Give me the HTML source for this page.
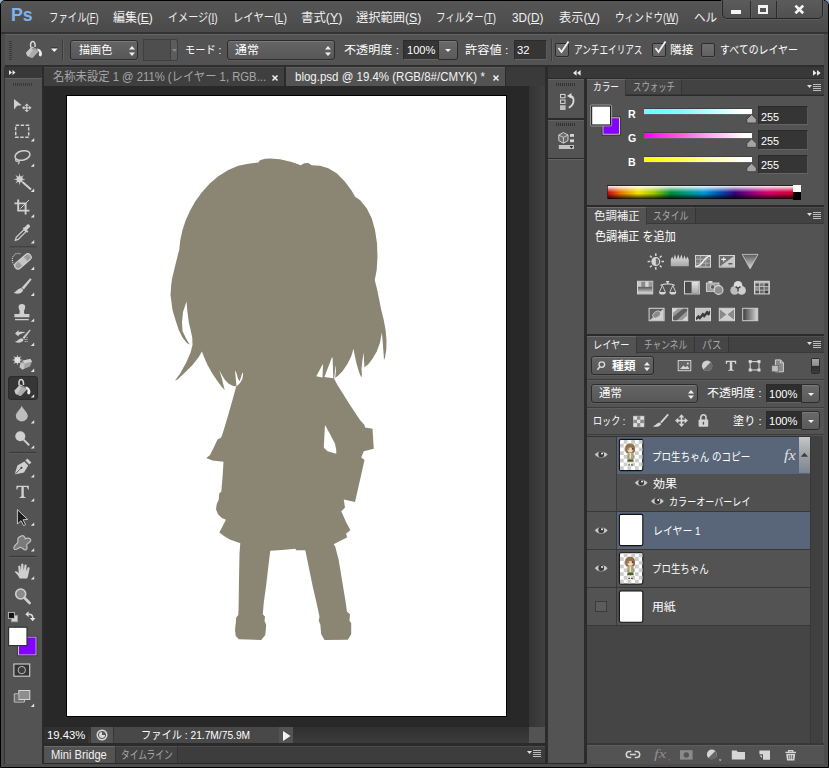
<!DOCTYPE html>
<html lang="ja">
<head>
<meta charset="utf-8">
<title>Photoshop</title>
<style>
html,body{margin:0;padding:0;}
body{width:829px;height:768px;overflow:hidden;background:#9cb4d8;position:relative;
 font-family:"Liberation Sans","Noto Sans CJK JP",sans-serif;font-size:11px;color:#e8e8e8;}
.a{position:absolute;box-sizing:border-box;}
.t{position:absolute;white-space:nowrap;transform-origin:0 0;}
svg{position:absolute;overflow:visible;}
.sel{position:absolute;box-sizing:border-box;border:1px solid #2c2c2c;border-radius:3px;background:linear-gradient(#656565,#575757);box-shadow:inset 0 1px 0 #7a7a7a, 0 1px 0 #5e5e5e;}
.inp{position:absolute;box-sizing:border-box;border:1px solid #2b2b2b;border-bottom-color:#646464;border-right-color:#5a5a5a;background:#353535;}
.btn{position:absolute;box-sizing:border-box;border:1px solid #2c2c2c;border-radius:0 3px 3px 0;background:linear-gradient(#6a6a6a,#5a5a5a);box-shadow:inset 0 1px 0 #7a7a7a;}
.cb{position:absolute;box-sizing:border-box;width:14px;height:14px;border:1px solid #2c2c2c;background:linear-gradient(#6e6e6e,#626262);border-radius:2px;box-shadow:0 1px 0 #606060;}
</style>
</head>
<body>
<div class="a" id="win" style="left:0;top:0;width:829px;height:768px;background:#4c4c4c;border:1px solid #000;border-radius:5px 5px 0 0;overflow:hidden;"></div>
<div class="a" style="left:1px;top:1px;width:827px;height:32px;background:linear-gradient(#565656,#505050 50%,#4a4a4a);border-radius:4px 4px 0 0;"></div>
<div class="a" style="left:1px;top:32px;width:827px;height:2px;background:#333;"></div>
<div class="t" id="t1" style="left:10.5px;top:4.12px;font-size:19px;line-height:22px;color:#80b2e8;font-weight:bold;transform:scaleX(0.9348);">Ps</div>
<div class="t" id="t2" style="left:49.3px;top:10.64px;font-size:12px;line-height:15px;color:#f2f2f2;transform:scaleX(0.7825);">ファイル(<u>F</u>)</div>
<div class="t" id="t3" style="left:113.3px;top:10.64px;font-size:12px;line-height:15px;color:#f2f2f2;transform:scaleX(0.9950);">編集(<u>E</u>)</div>
<div class="t" id="t4" style="left:168.05px;top:10.64px;font-size:12px;line-height:15px;color:#f2f2f2;transform:scaleX(0.8398);">イメージ(<u>I</u>)</div>
<div class="t" id="t5" style="left:233.05px;top:10.64px;font-size:12px;line-height:15px;color:#f2f2f2;transform:scaleX(0.8637);">レイヤー(<u>L</u>)</div>
<div class="t" id="t6" style="left:301.3px;top:10.64px;font-size:12px;line-height:15px;color:#f2f2f2;transform:scaleX(1.0325);">書式(<u>Y</u>)</div>
<div class="t" id="t7" style="left:356.3px;top:10.64px;font-size:12px;line-height:15px;color:#f2f2f2;transform:scaleX(1.0203);">選択範囲(<u>S</u>)</div>
<div class="t" id="t8" style="left:436.3px;top:10.64px;font-size:12px;line-height:15px;color:#f2f2f2;transform:scaleX(0.7973);">フィルター(<u>T</u>)</div>
<div class="t" id="t9" style="left:511.8px;top:10.64px;font-size:12px;line-height:15px;color:#f2f2f2;transform:scaleX(0.9781);">3D(<u>D</u>)</div>
<div class="t" id="t10" style="left:558.8px;top:10.64px;font-size:12px;line-height:15px;color:#f2f2f2;transform:scaleX(1.0200);">表示(<u>V</u>)</div>
<div class="t" id="t11" style="left:614.8px;top:10.64px;font-size:12px;line-height:15px;color:#f2f2f2;transform:scaleX(0.8013);">ウィンドウ(<u>W</u>)</div>
<div class="a" style="left:0;top:0;width:716.6px;height:33px;overflow:hidden;">
<div class="t" id="t12" style="left:693.8px;top:10.64px;font-size:12px;line-height:15px;color:#f2f2f2;transform:scaleX(0.9679);">ヘルプ(<u>H</u>)</div>
</div>
<div class="a" style="left:722px;top:0;width:101px;height:19px;border:1px solid #262626;border-top:none;border-radius:0 0 5px 5px;background:linear-gradient(#5b5b5b,#505050);box-shadow:0 1px 0 #5e5e5e,1px 0 0 #5a5a5a,-1px 0 0 #5a5a5a;"></div>
<div class="a" style="left:749.5px;top:1px;width:1px;height:17px;background:#2a2a2a;"></div>
<div class="a" style="left:750.5px;top:1px;width:1px;height:17px;background:#5c5c5c;"></div>
<div class="a" style="left:775.5px;top:1px;width:1px;height:17px;background:#2a2a2a;"></div>
<div class="a" style="left:776.5px;top:1px;width:1px;height:17px;background:#5c5c5c;"></div>
<div class="a" style="left:731.3px;top:9.6px;width:10.2px;height:4px;background:#f4f4f4;"></div>
<div class="a" style="left:757.6px;top:5.2px;width:10.4px;height:8.8px;border:2px solid #f4f4f4;border-top-width:3px;"></div>
<svg style="left:793.8px;top:5.4px" width="10.6" height="8.8"><path d="M1.4 0.6 L9.2 8.2 M9.2 0.6 L1.4 8.2" stroke="#f4f4f4" stroke-width="2.7" fill="none"/></svg>
<div class="a" style="left:5px;top:34px;width:819px;height:31px;background:#535353;border-top:1px solid #636363;"></div>
<div class="a" style="left:5px;top:65px;width:819px;height:2px;background:#2e2e2e;"></div>
<div class="a" style="left:9px;top:41px;width:3px;height:19px;background:repeating-linear-gradient(#3a3a3a 0 1px,transparent 1px 2px);"></div>
<div class="a" style="left:62px;top:39px;width:1px;height:22px;background:#3c3c3c;"></div>
<div class="a" style="left:63px;top:39px;width:1px;height:22px;background:#5f5f5f;"></div>
<svg style="left:0;top:0" width="829" height="768" viewBox="0 0 829 768"><g transform="translate(26 41)"><path d="M4.9 6.6 C3.8 2.8 5.2 0.5 6.8 0.6 C8.4 0.7 9.4 2.8 9.1 6" fill="none" stroke="#dadada" stroke-width="1.5"/><path d="M0.5 11.2 L5.2 6.2 C5.6 5.8 6.2 5.8 6.8 6 L12.2 8.4 C12.9 8.8 13.1 9.8 12.6 10.4 L7 16.4 C6.4 16.9 5.8 17 5 16.8 L2.4 15.6 C1 14.8 0 13 0.5 11.2Z" fill="#acacac"/><path d="M0.5 11.2 L5.2 6.2 C5.6 5.8 6.2 5.8 6.8 6 L8 6.6 L2.6 15.6 C1 14.8 0 13 0.5 11.2Z" fill="#c8c8c8"/><path d="M6 7.6 C8 7.4 10.6 8.4 12 9.6" fill="none" stroke="#7e7e7e" stroke-width="0.9"/><path d="M11.4 7.6 C13.6 7.8 15.2 9.4 15.8 11.4 C16.3 13.2 15.8 15.2 14.3 15.4 C12.8 15.4 12.5 13.8 13.1 12.3 C13.4 11 12.8 10 11.6 9.2Z" fill="#ececec"/></g><path d="M51 48.4 H57.6 L54.3 52Z" fill="#f4f4f4"/><path d="M51 47.6 H57.6" stroke="#333" stroke-width="0.8"/></svg>
<div class="sel" style="left:70.4px;top:40.4px;width:67.6px;height:19.6px;"></div>
<div class="t" id="t13" style="left:78.8px;top:42.69px;font-size:11px;line-height:14px;color:#fff;transform:scaleX(1.0091);">描画色</div>
<svg style="left:129px;top:46px" width="6" height="10"><path d="M3 0 L6 3.6 H0Z M3 10 L0 6.4 H6Z" fill="#f0f0f0"/></svg>
<div class="a" style="left:143px;top:38.6px;width:28px;height:22.6px;border:1px solid #3f3f3f;background:#4e4e4e;"></div>
<div class="a" style="left:170.6px;top:38.6px;width:7px;height:22.6px;border:1px solid #3f3f3f;border-left:none;border-radius:0 3px 3px 0;background:#5c5c5c;"></div>
<svg style="left:171.6px;top:49.4px" width="5" height="3"><path d="M0 0 H5 L2.5 3Z" fill="#8a8a8a"/></svg>
<div class="t" id="t14" style="left:185.3px;top:42.69px;font-size:11px;line-height:14px;color:#fff;transform:scaleX(0.9308);">モード :</div>
<div class="sel" style="left:227.4px;top:40.4px;width:107.8px;height:19.6px;"></div>
<div class="t" id="t15" style="left:234.8px;top:42.69px;font-size:11px;line-height:14px;color:#fff;transform:scaleX(1.0818);">通常</div>
<svg style="left:325px;top:46px" width="6" height="10"><path d="M3 0 L6 3.6 H0Z M3 10 L0 6.4 H6Z" fill="#f0f0f0"/></svg>
<div class="t" id="t16" style="left:344.3px;top:42.69px;font-size:11px;line-height:14px;color:#fff;transform:scaleX(1.1010);">不透明度 :</div>
<div class="inp" style="left:403px;top:40px;width:36px;height:20px;"></div>
<div class="t" id="t17" style="left:406.8px;top:43.19px;font-size:11px;line-height:14px;color:#fff;transform:scaleX(1.0107);">100%</div>
<div class="btn" style="left:438px;top:40px;width:20px;height:20px;"></div>
<svg style="left:445px;top:49px" width="6" height="3"><path d="M0 0 H6 L3 3Z" fill="#f0f0f0"/></svg>
<div class="t" id="t18" style="left:464.8px;top:42.69px;font-size:11px;line-height:14px;color:#fff;transform:scaleX(1.1103);">許容値 :</div>
<div class="inp" style="left:514px;top:40px;width:33px;height:20px;"></div>
<div class="t" id="t19" style="left:517.3px;top:43.19px;font-size:11px;line-height:14px;color:#fff;transform:scaleX(1.0250);">32</div>
<div class="a" style="left:551px;top:39px;width:1px;height:22px;background:#3c3c3c;"></div>
<div class="a" style="left:552px;top:39px;width:1px;height:22px;background:#5f5f5f;"></div>
<div class="cb" style="left:555px;top:43px;"></div>
<svg style="left:556px;top:40px" width="14" height="14"><path d="M2.5 8 L5.5 12 L12.5 1.5" stroke="#f4f4f4" stroke-width="1.8" fill="none"/></svg>
<div class="t" id="t20" style="left:574.3px;top:42.69px;font-size:11px;line-height:14px;color:#fff;transform:scaleX(0.7818);">アンチエイリアス</div>
<div class="cb" style="left:652px;top:43px;"></div>
<svg style="left:653px;top:40px" width="14" height="14"><path d="M2.5 8 L5.5 12 L12.5 1.5" stroke="#f4f4f4" stroke-width="1.8" fill="none"/></svg>
<div class="t" id="t21" style="left:670.3px;top:42.69px;font-size:11px;line-height:14px;color:#fff;transform:scaleX(1.0591);">隣接</div>
<div class="cb" style="left:701px;top:43px;"></div>
<div class="t" id="t22" style="left:720.05px;top:42.69px;font-size:11px;line-height:14px;color:#fff;transform:scaleX(0.9017);">すべてのレイヤー</div>
<div class="a" style="left:4px;top:67px;width:1px;height:697px;background:#333;"></div>
<div class="a" style="left:5px;top:67px;width:37px;height:11px;background:#383838;"></div>
<div class="a" style="left:5px;top:78px;width:37px;height:686px;background:#535353;border-top:1px solid #636363;"></div>
<div class="a" style="left:42px;top:67px;width:2px;height:697px;background:#2b2b2b;"></div>
<svg style="left:9px;top:70.4px" width="7" height="5"><path d="M0 0 L3 2.5 L0 5Z M3.5 0 L6.5 2.5 L3.5 5Z" fill="#e8e8e8"/></svg>
<div class="a" style="left:13px;top:83px;width:20px;height:3px;background:repeating-linear-gradient(90deg,#3a3a3a 0 1px,transparent 1px 2px);"></div>
<div class="a" style="left:44px;top:67px;width:502px;height:697px;background:#282828;"></div>
<div class="a" style="left:44px;top:67px;width:502px;height:19px;background:#3a3a3a;"></div>
<div class="a" style="left:44px;top:67px;width:240px;height:19px;background:#3f3f3f;border-top:1px solid #4a4a4a;"></div>
<div class="t" id="t23" style="left:53.05px;top:69.92px;font-size:12.5px;line-height:15.5px;color:#a6a6a6;transform:scaleX(0.9038);">名称未設定 1 @ 211% (レイヤー 1, RGB...</div>
<svg style="left:272px;top:74.5px" width="6" height="6"><path d="M0.5 0.5 L5.5 5.5 M5.5 0.5 L0.5 5.5" stroke="#f0f0f0" stroke-width="1.5" fill="none"/></svg>
<div class="a" style="left:284px;top:67px;width:2px;height:19px;background:#2b2b2b;"></div>
<div class="a" style="left:286px;top:67px;width:219px;height:19px;background:#535353;border-top:1px solid #636363;"></div>
<div class="t" id="t24" style="left:294.8px;top:69.92px;font-size:12.5px;line-height:15.5px;color:#f4f4f4;transform:scaleX(0.9193);">blog.psd @ 19.4% (RGB/8#/CMYK) *</div>
<svg style="left:493px;top:74.5px" width="6" height="6"><path d="M0.5 0.5 L5.5 5.5 M5.5 0.5 L0.5 5.5" stroke="#f0f0f0" stroke-width="1.5" fill="none"/></svg>
<div class="a" style="left:505px;top:67px;width:1px;height:19px;background:#2b2b2b;"></div>
<div class="a" style="left:66px;top:95px;width:441px;height:622px;background:#000;"></div>
<div class="a" style="left:67px;top:96px;width:439px;height:620px;background:#fff;"></div>
<div class="a" style="left:529px;top:86px;width:16px;height:641px;background:linear-gradient(90deg,#343434,#404040);"></div>
<div class="a" style="left:44px;top:727px;width:485px;height:16px;background:linear-gradient(#303030,#3c3c3c);"></div>
<div class="a" style="left:529px;top:727px;width:16px;height:16px;background:#535353;"></div>
<div class="a" style="left:44px;top:727px;width:44px;height:16px;background:#303030;"></div>
<div class="t" id="t25" style="left:47.099999999999994px;top:728.19px;font-size:11px;line-height:14px;color:#fff;transform:scaleX(1.0270);">19.43%</div>
<div class="a" style="left:91px;top:727px;width:22px;height:16px;background:#535353;"></div>
<svg style="left:96px;top:729px" width="12" height="12"><circle cx="6" cy="6" r="5.5" fill="#d8d8d8"/><path d="M6 6 V2.5 A3.5 3.5 0 0 1 9.5 6Z" fill="#555"/><circle cx="6" cy="6" r="3.6" fill="none" stroke="#555" stroke-width="1"/></svg>
<div class="a" style="left:114px;top:727px;width:165px;height:16px;background:#484848;"></div>
<div class="t" id="t26" style="left:141.3px;top:728.19px;font-size:11px;line-height:14px;color:#fff;transform:scaleX(0.9299);">ファイル : 21.7M/75.9M</div>
<div class="a" style="left:279px;top:727px;width:14px;height:16px;background:#535353;"></div>
<svg style="left:283px;top:730.5px" width="8" height="10"><path d="M0 0 L7.5 5 L0 10Z" fill="#f4f4f4"/></svg>
<div class="a" style="left:44px;top:743px;width:502px;height:3px;background:#2b2b2b;"></div>
<div class="a" style="left:44px;top:746px;width:501px;height:17px;background:#3d3d3d;border-top:1px solid #4c4c4c;"></div>
<div class="a" style="left:44px;top:746px;width:71px;height:17px;background:#535353;border-top:1px solid #6a6a6a;"></div>
<div class="t" id="t27" style="left:51.3px;top:747.84px;font-size:12px;line-height:15px;color:#f0f0f0;transform:scaleX(0.9300);">Mini Bridge</div>
<div class="a" style="left:115px;top:746px;width:63px;height:17px;background:#424242;border-top:1px solid #505050;border-right:1px solid #333;border-left:1px solid #333;"></div>
<div class="t" id="t28" style="left:120.8px;top:747.77px;font-size:11.5px;line-height:14.5px;color:#a8a8a8;transform:scaleX(0.7574);">タイムライン</div>
<svg style="left:527px;top:750px" width="14" height="8"><path d="M0 1 H5 L2.5 4Z" fill="#e0e0e0"/><path d="M6 0.5 H14 M6 2.5 H14 M6 4.5 H14 M6 6.5 H14" stroke="#bcbcbc" stroke-width="1"/></svg>
<div class="a" style="left:545px;top:67px;width:3px;height:697px;background:#2b2b2b;"></div>
<svg style="left:0;top:0" width="829" height="768" viewBox="0 0 829 768"><path d="M258.3,162.5 L260,160.3 265,158.7 270,158.5 280,159.2 291.7,162 300.8,165.3 304.2,163.3 308.3,163 311.7,165.3 320,165.8 328.3,168.3 336.7,173.3 345,181.7 351.7,190.8 355,196.7 360,200 366.7,208.3 371.7,218.3 375,230 377,243.3 377.5,256.7 376.7,270 374.75,280 377.25,290 379.75,302.5 381.25,310 383.75,320 385.6,330 386.5,340 386.25,350 385,357.5 384,360  383.5,352.5 382.75,342.5 381.9,332.5 380,342.5 376.9,351.25 372.5,358.75 368.1,364.4 364.4,367.25  364,360 363.75,352.5 362.5,360 361.5,368.75 361.9,375 361.25,377.5  358.75,371.25 356.25,362.5 354.4,353.75 353.5,348.75 351.25,356.25 347.5,363.75 342.5,371.25 337.5,376.25 334,378.5  337.5,385 342.5,393 350,405 360,420 364.5,425 365,427.5 372.5,428.75 373.75,448.75 363.75,451.25 361.25,457.5 364.5,460 360,480 355,502 343.75,499.5 345,507.5 341.25,511.25 346.25,522.5 350.3,530  348.7,531.7 346.2,533.3 347,537.5 340.3,540.8 333.7,544.2 335.3,546.7 338.7,560 342,580 345.3,600 347,611.7 350,614.2 349.5,620.8 351.2,623.3 351.2,634.2 347.8,639.7 324.5,640 321.2,634.2 320.3,624.2 318.7,620.8 319.5,616.7 317,605 312.8,586.7 308.7,566.7 305.3,550.3  296.2,550.3 295.3,548.7 282,550 270.3,550.8  268.7,563.3 266.2,585 263.7,603.3 262.8,614.2 265,616.7 264.5,620.8 266.2,625 265.3,635 261.2,640 238.7,639.2 235.7,635.8 235,630 235.7,623.3 236.2,617.5 238.3,615 238.7,603.3 239,580 239.5,553.3 240.3,543.3  232,540.2 229.3,539.2 224,536 219.3,532.5 226,519.7 221.8,518 218,514.2 216,509.2 216.7,504.2 218.7,499.7 219.3,493.3 221.3,491.7 222.7,475 223.5,461.7 212.5,460.5 206.25,458 210,455 213.75,447.5 217.5,439.5 221.25,437.5 223.75,430 227.5,417.5 232.5,400 236.25,386.25  233.1,386 228.75,383.75 225,380 221.9,375 219.4,370.25 221.9,378.75 223.75,386.25 224.75,390  221.9,386.9 217.5,381.25 212.5,373.75 207.5,365 203.75,356.25 201.9,351.5  198.75,356.9 192.5,365 185,372.5 177.5,379.4 175,380.6  180,373.75 186.25,362.5 190.6,352.5 192.5,345 192.25,337.5 190.6,330 188.75,322 187.5,312.5 186.5,301.5  183,312 182,322 182.5,331 185.6,337.5 189.75,344.75  186.9,343 182.5,337.5 178.75,330 175.5,320 172.5,310 170.5,295 171.2,285 172.2,278 175.8,263.3 178,254.2 179.2,250 180.3,240 182.5,230 185.8,220 190,210.8 195,201.7 201.7,192.5 210,183.3 218.3,176.3 228.3,170 238.3,165.8 248.3,163.7 Z" fill="#8b8573"/><path d="M235,370.6 L236.25,372.5 238.1,378.75 239.4,381.25 240,380 242.5,372.5 243.1,373.75 242.5,378.75 240,383.1 237.5,385.6 236.5,386.5 Z" fill="#fff"/><path d="M323,363.75 L316.25,376.25 322.5,377.5 Z" fill="#fff"/><path d="M331.9,357.5 L324.4,376.9 333.3,378.3 332.6,357.5 Z" fill="#fff"/><path d="M335.6,365 L334.2,378.4 335.2,377.8 336,370 Z" fill="#fff"/><path d="M325,425 L323.75,447.5 327.5,451.25 336.25,453.75 336.25,450 335,443.75 330,434 Z" fill="#fff"/></svg>
<svg style="left:0;top:0" width="829" height="768" viewBox="0 0 829 768"><path d="M9 247 H36.5" stroke="#3a3a3a" stroke-width="1.2"/><path d="M9 248 H36.5" stroke="#5d5d5d" stroke-width="0.8"/><path d="M9 452.5 H36.5" stroke="#3a3a3a" stroke-width="1.2"/><path d="M9 453.5 H36.5" stroke="#5d5d5d" stroke-width="0.8"/><path d="M9 556.5 H36.5" stroke="#3a3a3a" stroke-width="1.2"/><path d="M9 557.5 H36.5" stroke="#5d5d5d" stroke-width="0.8"/><path d="M14 99 L21.8 105.3 L17.2 105.8 L14 109.6Z" fill="#cfcfcf"/><path d="M26.8 103.4 L29 105.8 H27.4 V107.2 H29.2 V105.8 L31.6 107.8 L29.2 109.8 V108.4 H27.4 V110 H29 L26.8 112.2 L24.6 110 H26.2 V108.4 H24.4 V109.8 L22 107.8 L24.4 105.8 V107.2 H26.2 V105.8 H24.6Z" fill="#cfcfcf"/><rect x="15.7" y="125.2" width="13" height="12" fill="none" stroke="#cfcfcf" stroke-width="1.5" stroke-dasharray="3.4 1.6"/><path d="M34.2 138.0 V141.4 H30.8Z" fill="#e4e4e4"/><ellipse cx="22.5" cy="155.5" rx="7.6" ry="4.6" transform="rotate(-14 22.5 155.5)" fill="none" stroke="#cfcfcf" stroke-width="1.5"/><path d="M16.5 158.5 C14.5 160 16 161.8 18 161.2 C19.5 160.8 19.8 162.8 18 164" fill="none" stroke="#cfcfcf" stroke-width="1.2"/><path d="M34.2 163.4 V166.8 H30.8Z" fill="#e4e4e4"/><polygon points="25.6,179.3 21.8,180.2 23.8,183.5 20.5,181.5 19.6,185.3 18.7,181.5 15.4,183.5 17.4,180.2 13.6,179.3 17.4,178.4 15.4,175.1 18.7,177.1 19.6,173.3 20.5,177.1 23.8,175.1 21.8,178.4" fill="#cfcfcf"/><circle cx="19.6" cy="179.3" r="3" fill="#cfcfcf"/><path d="M22.5 182 L31 189.6" stroke="#cfcfcf" stroke-width="2"/><path d="M34.2 188.6 V192 H30.8Z" fill="#e4e4e4"/><path d="M18.2 199.5 V210.6 H29.4 M14.4 203.4 H25.6 V214.5" fill="none" stroke="#cfcfcf" stroke-width="1.9"/><path d="M29 200 L20.5 208.5" stroke="#cfcfcf" stroke-width="1"/><path d="M34.2 214.1 V217.5 H30.8Z" fill="#e4e4e4"/><path d="M15.4 240.2 L16.2 237.4 L24 229.6 L26 231.6 L18.2 239.4Z" fill="none" stroke="#cfcfcf" stroke-width="1.3"/><path d="M22.8 228.4 L27.2 232.8 L28.4 231.6 L26.9 230.1 L29.9 227.1 A2 2 0 0 0 27.3 224.5 L24.5 227.4 L24 226.9Z" fill="#cfcfcf"/><path d="M34.2 240.1 V243.5 H30.8Z" fill="#e4e4e4"/><g transform="rotate(-41 22.8 261.4)"><rect x="13.2" y="258.2" width="19.4" height="6.6" rx="3" fill="#9a9a9a" stroke="#cfcfcf" stroke-width="1.2"/><rect x="19.4" y="258.2" width="7" height="6.6" fill="#cfcfcf" opacity="0.8"/></g><path d="M20.4 254 A5 5.6 0 1 0 15.6 265.6" fill="none" stroke="#cfcfcf" stroke-width="1.2" stroke-dasharray="1 1"/><path d="M34.2 266.6 V270 H30.8Z" fill="#e4e4e4"/><path d="M30.2 278.2 L31.6 279.4 L23.8 289.6 L21.6 287.8Z" fill="#cfcfcf"/><path d="M21.2 288 L23.2 290 C21.8 294 17 294.8 13.6 292.4 C16.6 292 17 288.8 21.2 288Z" fill="#cfcfcf"/><path d="M34.2 292.6 V296 H30.8Z" fill="#e4e4e4"/><path d="M19.2 314 C20.8 311 18.6 309.4 18.6 307.2 A3.3 3.3 0 0 1 25.2 307.2 C25.2 309.4 23 311 24.6 314 H29.4 V317.2 H14.4 V314Z" fill="#cfcfcf"/><path d="M15 319.6 H28.8" stroke="#cfcfcf" stroke-width="1.3"/><path d="M34.2 318.40000000000003 V321.8 H30.8Z" fill="#e4e4e4"/><path d="M29.8 329.4 L30.7 330.3 L24.2 339 L22.6 337.6Z" fill="#cfcfcf"/><path d="M22.2 338.2 L23.7 339.8 C22.3 342.8 18 343.8 14.8 341.8 C17.6 341.4 18.2 338.8 22.2 338.2Z" fill="#cfcfcf"/><path d="M15 333.6 L18.6 330 V332.2 C21.6 331.4 24 332 25.6 333 C23.4 332.8 21 333.4 18.6 335 V336.6Z" fill="#cfcfcf"/><path d="M27 337 V342" stroke="#cfcfcf" stroke-width="1" stroke-dasharray="1 1"/><path d="M25.2 339 V342.6" stroke="#cfcfcf" stroke-width="1" stroke-dasharray="1 1"/><path d="M34.2 342.6 V346 H30.8Z" fill="#e4e4e4"/><polygon points="23.0,360.0 19.4,360.8 21.4,364.0 18.2,362.0 17.4,365.6 16.6,362.0 13.4,364.0 15.4,360.8 11.8,360.0 15.4,359.2 13.4,356.0 16.6,358.0 17.4,354.4 18.2,358.0 21.4,356.0 19.4,359.2" fill="#e0e0e0"/><circle cx="17.4" cy="360" r="3" fill="#e0e0e0"/><path d="M23 360.4 L30.4 359 L32 361.6 L30 366.6 L22.4 369.4 L19.6 367.2 L20.4 363.2Z" fill="#a4a4a4"/><path d="M23 360.4 L30.4 359 L32 361.6 L24.6 363.4Z" fill="#cfcfcf"/><path d="M20.4 363.4 L24.6 363.4 L24 369 L22.4 369.4 L19.6 367.2Z" fill="#c4c4c4"/><path d="M34.2 368.6 V372 H30.8Z" fill="#e4e4e4"/><rect x="8.5" y="376.5" width="29" height="23" rx="2.5" fill="#363636" stroke="#2c2c2c" stroke-width="1"/><g transform="translate(14.4 379)"><path d="M4.9 6.6 C3.8 2.8 5.2 0.5 6.8 0.6 C8.4 0.7 9.4 2.8 9.1 6" fill="none" stroke="#dadada" stroke-width="1.5"/><path d="M0.5 11.2 L5.2 6.2 C5.6 5.8 6.2 5.8 6.8 6 L12.2 8.4 C12.9 8.8 13.1 9.8 12.6 10.4 L7 16.4 C6.4 16.9 5.8 17 5 16.8 L2.4 15.6 C1 14.8 0 13 0.5 11.2Z" fill="#acacac"/><path d="M0.5 11.2 L5.2 6.2 C5.6 5.8 6.2 5.8 6.8 6 L8 6.6 L2.6 15.6 C1 14.8 0 13 0.5 11.2Z" fill="#c8c8c8"/><path d="M6 7.6 C8 7.4 10.6 8.4 12 9.6" fill="none" stroke="#7e7e7e" stroke-width="0.9"/><path d="M11.4 7.6 C13.6 7.8 15.2 9.4 15.8 11.4 C16.3 13.2 15.8 15.2 14.3 15.4 C12.8 15.4 12.5 13.8 13.1 12.3 C13.4 11 12.8 10 11.6 9.2Z" fill="#ececec"/></g><path d="M34.2 394.20000000000005 V397.6 H30.8Z" fill="#e4e4e4"/><path d="M21.8 405.8 C23.4 409.6 27.8 412.8 27.8 416 A6 5.4 0 0 1 15.8 416 C15.8 412.8 20.2 409.6 21.8 405.8Z" fill="#bdbdbd"/><path d="M34.2 420.0 V423.4 H30.8Z" fill="#e4e4e4"/><circle cx="20.3" cy="436.3" r="5" fill="#cfcfcf"/><path d="M23.6 439.6 L29.2 445.2" stroke="#cfcfcf" stroke-width="2"/><path d="M34.2 445.20000000000005 V448.6 H30.8Z" fill="#e4e4e4"/><path d="M14.6 474.6 L17.4 465.4 L24.4 461.6 L28.2 465.4 L24 472.4Z" fill="#cfcfcf"/><path d="M14.6 474.6 L21 468.2" stroke="#555" stroke-width="0.9"/><circle cx="21.4" cy="467.8" r="1.1" fill="#444"/><path d="M25.4 460.4 L27.4 458.4 L31.4 462.4 L29.4 464.4Z" fill="#cfcfcf"/><path d="M34.2 474.20000000000005 V477.6 H30.8Z" fill="#e4e4e4"/><path d="M16.4 485.8 H28.8 V489.6 H27.8 C27.6 487.6 27 487 25.4 487 H23.8 V495.6 C23.8 497 24.4 497.2 25.6 497.3 V498 H19.6 V497.3 C20.8 497.2 21.4 497 21.4 495.6 V487 H19.8 C18.2 487 17.6 487.6 17.4 489.6 H16.4Z" fill="#cfcfcf"/><path d="M34.2 498.20000000000005 V501.6 H30.8Z" fill="#e4e4e4"/><path d="M17.4 509.6 L27.6 519.4 L23 519.8 L25.6 524.6 L23.6 525.6 L21 520.8 L17.4 524Z" fill="#1e1e1e" stroke="#c4c4c4" stroke-width="1"/><path d="M34.2 522.4 V525.8 H30.8Z" fill="#e4e4e4"/><path d="M21.2 536 C23.4 535 25 536.6 25.2 538.8 C27 538 30.4 537.6 30.8 540 C31.2 542.4 27.4 543 26.8 544.6 C26.2 546.4 28.2 548.6 26.2 549.8 C24.2 551 22.6 547.6 20.8 547.4 C18.8 547.2 16.4 550.6 14.4 549.2 C12.4 547.6 15.8 544.6 17.4 543 C18.8 541.4 17.2 540 18 538.4 C18.8 536.8 20 536.6 21.2 536Z" fill="#7a7a7a" stroke="#c0c0c0" stroke-width="1.2"/><path d="M34.2 548.2 V551.6 H30.8Z" fill="#e4e4e4"/><path d="M19.6 578.6 C18.6 575.6 16.4 573.8 14.6 571.8 C15.6 570.6 17.4 571.4 18.8 573.2 L18.2 566.2 C19 565.2 20.2 565.6 20.4 566.6 L21 570.8 L21.2 564.2 C22 563.2 23.2 563.4 23.4 564.4 L23.6 570.6 L24.6 565 C25.4 564.2 26.6 564.6 26.6 565.6 L26.2 571.2 L27.8 567.6 C28.8 567 29.8 567.6 29.6 568.6 C28.8 572 28.6 575.4 27.2 578.6Z" fill="#cfcfcf"/><path d="M34.2 576.2 V579.6 H30.8Z" fill="#e4e4e4"/><circle cx="20.7" cy="594" r="5" fill="#8a8a8a" stroke="#cfcfcf" stroke-width="1.6"/><path d="M24.6 598 L29.6 603" stroke="#cfcfcf" stroke-width="2.6" stroke-linecap="round"/><rect x="11.4" y="615.6" width="6.2" height="6.2" fill="#d4d4d4" stroke="#9a9a9a" stroke-width="0.8"/><rect x="8.4" y="612.4" width="6" height="6" fill="#141414" stroke="#bdbdbd" stroke-width="0.9"/><path d="M28.4 614.2 C31.6 614 32.8 615.6 32.8 618.2" fill="none" stroke="#e0e0e0" stroke-width="1.5"/><path d="M28.6 611.2 V617.2 L25.4 614.2Z M29.8 618 H35.6 L32.7 621.2Z" fill="#e0e0e0"/><rect x="18.5" y="637" width="17.6" height="18" fill="#8400ff" stroke="#c8c8c8" stroke-width="1"/><rect x="17.6" y="636.2" width="19.4" height="19.6" fill="none" stroke="#3a3a3a" stroke-width="0.8"/><rect x="8.6" y="627.2" width="18.4" height="18.4" fill="#fff" stroke="#333" stroke-width="1.2"/><rect x="13.9" y="664" width="15.8" height="12.2" fill="#333" stroke="#d0d0d0" stroke-width="1.1"/><circle cx="21.8" cy="670.1" r="3.7" fill="#3c3c3c" stroke="#bcbcbc" stroke-width="1"/><rect x="18.8" y="690.5" width="11" height="9" fill="#8e8e8e" stroke="#d4d4d4" stroke-width="1"/><path d="M18.3 693.9 H14.3 V702 H24.3 V700" fill="none" stroke="#d4d4d4" stroke-width="1"/><path d="M14.8 694.4 H18.3 V700 H23.8 V701.5 H14.8Z" fill="#707070"/><path d="M34.2 703.6 V707 H30.8Z" fill="#e4e4e4"/></svg>
<div class="a" style="left:548px;top:67px;width:276px;height:11px;background:#383838;"></div>
<div class="a" style="left:548px;top:78px;width:276px;height:686px;background:#2b2b2b;"></div>
<svg style="left:572.6px;top:69.8px" width="8" height="6"><path d="M3.6 0 L0 2.9 L3.6 5.8Z M7.6 0 L4 2.9 L7.6 5.8Z" fill="#e8e8e8"/></svg>
<svg style="left:812.8px;top:69.8px" width="8" height="6"><path d="M0 0 L3.6 2.9 L0 5.8Z M4 0 L7.6 2.9 L4 5.8Z" fill="#e8e8e8"/></svg>
<div class="a" style="left:548px;top:79px;width:36px;height:39px;background:#535353;border-top:1px solid #636363;"></div>
<div class="a" style="left:556px;top:83px;width:19px;height:3px;background:repeating-linear-gradient(90deg,#333 0 1px,transparent 1px 2px);"></div>
<div class="a" style="left:548px;top:119.5px;width:36px;height:38.5px;background:#535353;border-top:1px solid #636363;"></div>
<div class="a" style="left:556px;top:123px;width:19px;height:3px;background:repeating-linear-gradient(90deg,#333 0 1px,transparent 1px 2px);"></div>
<div class="a" style="left:548px;top:159px;width:36px;height:604px;background:#535353;border-top:1px solid #636363;"></div>
<div class="a" style="left:587px;top:96px;width:237px;height:109px;background:#535353;"></div>
<div class="a" style="left:587px;top:79px;width:237px;height:16.4px;background:#424242;border-top:1px solid #4e4e4e;border-bottom:1px solid #383838;"></div>
<div class="a" style="left:587px;top:79px;width:38.5px;height:17.4px;background:#535353;border-top:1px solid #6a6a6a;border-right:1px solid #383838;"></div>
<div class="t" id="t29" style="left:593.3px;top:80.49px;font-size:11px;line-height:14px;color:#f4f4f4;transform:scaleX(0.7879);">カラー</div>
<div class="a" style="left:625.5px;top:79px;width:56.0px;height:16.4px;background:#464646;border-top:1px solid #525252;border-right:1px solid #353535;border-bottom:1px solid #383838;"></div>
<div class="t" id="t30" style="left:632.5px;top:80.49px;font-size:11px;line-height:14px;color:#aaaaaa;transform:scaleX(0.7636);">スウォッチ</div>
<svg style="left:807px;top:84px" width="14" height="8"><path d="M0 1 H5 L2.5 4Z" fill="#e0e0e0"/><path d="M6 0.5 H14 M6 2.5 H14 M6 4.5 H14 M6 6.5 H14" stroke="#bcbcbc" stroke-width="1"/></svg>
<div class="t" id="t31" style="left:627.8px;top:107.51px;font-size:10.5px;line-height:13.5px;color:#fff;font-weight:bold;transform:scaleX(1.0125);">R</div>
<div class="a" style="left:644px;top:108.6px;width:108px;height:5px;background:linear-gradient(90deg,#66ffff,#7fffff 35%,#fff 92%);box-shadow:0 -1px 0 #404040, 0 1px 0 #606060;"></div>
<div class="inp" style="left:757.5px;top:106.0px;width:50px;height:19.4px;"></div>
<div class="t" id="t32" style="left:760.8px;top:109.59px;font-size:11px;line-height:14px;color:#fff;transform:scaleX(0.9889);">255</div>
<div class="t" id="t33" style="left:627.8px;top:131.91px;font-size:10.5px;line-height:13.5px;color:#fff;font-weight:bold;transform:scaleX(1.0125);">G</div>
<div class="a" style="left:644px;top:133.0px;width:108px;height:5px;background:linear-gradient(90deg,#ff00ff,#ff5fe0 35%,#fff 92%);box-shadow:0 -1px 0 #404040, 0 1px 0 #606060;"></div>
<div class="inp" style="left:757.5px;top:130.4px;width:50px;height:19.4px;"></div>
<div class="t" id="t34" style="left:760.8px;top:133.99px;font-size:11px;line-height:14px;color:#fff;transform:scaleX(0.9889);">255</div>
<div class="t" id="t35" style="left:627.8px;top:156.31px;font-size:10.5px;line-height:13.5px;color:#fff;font-weight:bold;transform:scaleX(1.0125);">B</div>
<div class="a" style="left:644px;top:157.4px;width:108px;height:5px;background:linear-gradient(90deg,#ffff00,#ffff50 35%,#fff 92%);box-shadow:0 -1px 0 #404040, 0 1px 0 #606060;"></div>
<div class="inp" style="left:757.5px;top:154.8px;width:50px;height:19.4px;"></div>
<div class="t" id="t36" style="left:760.8px;top:158.39px;font-size:11px;line-height:14px;color:#fff;transform:scaleX(0.9889);">255</div>
<div class="a" style="left:607px;top:184.6px;width:194.4px;height:15.4px;background:linear-gradient(90deg,#c8001e 0%,#e67800 7%,#f2e400 16%,#a0c800 24%,#008c3c 33%,#009a8c 42%,#0096d8 50%,#0050b0 58%,#3a0078 66%,#8a0080 74%,#d4006e 82%,#d00040 92%,#c40018 100%);"></div>
<div class="a" style="left:607px;top:184.6px;width:194.4px;height:15.4px;border:1px solid rgba(40,40,40,0.8);background:linear-gradient(rgba(255,255,255,0.95) 0%,rgba(255,255,255,0.5) 22%,rgba(255,255,255,0) 48%,rgba(0,0,0,0) 58%,rgba(0,0,0,0.55) 85%,rgba(0,0,0,0.9) 100%);"></div>
<div class="a" style="left:793.4px;top:184.6px;width:8px;height:7.7px;background:#fff;"></div>
<div class="a" style="left:793.4px;top:192.3px;width:8px;height:7.7px;background:#000;"></div>
<div class="a" style="left:587px;top:224px;width:237px;height:109.5px;background:#535353;"></div>
<div class="a" style="left:587px;top:207.4px;width:237px;height:16.4px;background:#424242;border-top:1px solid #4e4e4e;border-bottom:1px solid #383838;"></div>
<div class="a" style="left:587px;top:207.4px;width:59.5px;height:17.4px;background:#535353;border-top:1px solid #6a6a6a;border-right:1px solid #383838;"></div>
<div class="t" id="t37" style="left:593.5999999999999px;top:208.89px;font-size:11px;line-height:14px;color:#f4f4f4;transform:scaleX(1.0386);">色調補正</div>
<div class="a" style="left:646.5px;top:207.4px;width:49.5px;height:16.4px;background:#464646;border-top:1px solid #525252;border-right:1px solid #353535;border-bottom:1px solid #383838;"></div>
<div class="t" id="t38" style="left:652.6999999999999px;top:208.89px;font-size:11px;line-height:14px;color:#aaaaaa;transform:scaleX(0.8023);">スタイル</div>
<svg style="left:807px;top:212.4px" width="14" height="8"><path d="M0 1 H5 L2.5 4Z" fill="#e0e0e0"/><path d="M6 0.5 H14 M6 2.5 H14 M6 4.5 H14 M6 6.5 H14" stroke="#bcbcbc" stroke-width="1"/></svg>
<div class="t" id="t39" style="left:595.0999999999999px;top:229.94px;font-size:12px;line-height:15px;color:#fff;transform:scaleX(0.9253);">色調補正 を追加</div>
<div class="a" style="left:587px;top:353px;width:237px;height:411px;background:#535353;"></div>
<div class="a" style="left:587px;top:336.2px;width:237px;height:16.4px;background:#424242;border-top:1px solid #4e4e4e;border-bottom:1px solid #383838;"></div>
<div class="a" style="left:587px;top:336.2px;width:50px;height:17.4px;background:#535353;border-top:1px solid #6a6a6a;border-right:1px solid #383838;"></div>
<div class="t" id="t40" style="left:592.8px;top:337.69px;font-size:11px;line-height:14px;color:#f4f4f4;transform:scaleX(0.8364);">レイヤー</div>
<div class="a" style="left:637px;top:336.2px;width:58px;height:16.4px;background:#464646;border-top:1px solid #525252;border-right:1px solid #353535;border-bottom:1px solid #383838;"></div>
<div class="t" id="t41" style="left:643.9px;top:337.69px;font-size:11px;line-height:14px;color:#aaaaaa;transform:scaleX(0.7909);">チャンネル</div>
<div class="a" style="left:695px;top:336.2px;width:34px;height:16.4px;background:#464646;border-top:1px solid #525252;border-right:1px solid #353535;border-bottom:1px solid #383838;"></div>
<div class="t" id="t42" style="left:701.5px;top:337.69px;font-size:11px;line-height:14px;color:#aaaaaa;transform:scaleX(0.8909);">パス</div>
<svg style="left:807px;top:341.2px" width="14" height="8"><path d="M0 1 H5 L2.5 4Z" fill="#e0e0e0"/><path d="M6 0.5 H14 M6 2.5 H14 M6 4.5 H14 M6 6.5 H14" stroke="#bcbcbc" stroke-width="1"/></svg>
<div class="sel" style="left:590.5px;top:356.3px;width:63px;height:19.2px;"></div>
<div class="t" id="t43" style="left:611.5999999999999px;top:359.19px;font-size:11px;line-height:14px;color:#fff;font-weight:bold;transform:scaleX(1.0682);">種類</div>
<svg style="left:643.5px;top:361.5px" width="6" height="9"><path d="M3 0 L6 3.4 H0Z M3 9 L0 5.6 H6Z" fill="#f0f0f0"/></svg>
<div class="a" style="left:810.6px;top:357.6px;width:9px;height:16.6px;border:1px solid #2c2c2c;border-radius:1.5px;background:linear-gradient(#a6a6a6 0,#8e8e8e 46%,#2e2e2e 50%,#3c3c3c 100%);"></div>
<div class="a" style="left:587px;top:379px;width:237px;height:1px;background:#3c3c3c;"></div>
<div class="a" style="left:587px;top:380px;width:237px;height:1px;background:#5e5e5e;"></div>
<div class="sel" style="left:590.5px;top:383.8px;width:107.8px;height:19px;"></div>
<div class="t" id="t44" style="left:598.5999999999999px;top:386.49px;font-size:11px;line-height:14px;color:#fff;transform:scaleX(1.0409);">通常</div>
<svg style="left:688.2px;top:389.6px" width="6" height="9"><path d="M3 0 L6 3.4 H0Z M3 9 L0 5.6 H6Z" fill="#f0f0f0"/></svg>
<div class="t" id="t45" style="left:706.6999999999999px;top:386.49px;font-size:11px;line-height:14px;color:#fff;transform:scaleX(1.0880);">不透明度 :</div>
<div class="inp" style="left:765.5px;top:384px;width:36px;height:19px;background:#2e2e2e;"></div>
<div class="t" id="t46" style="left:768.9px;top:387.19px;font-size:11px;line-height:14px;color:#fff;transform:scaleX(1.0107);">100%</div>
<div class="btn" style="left:800.6px;top:384px;width:19px;height:19px;"></div>
<svg style="left:807.6px;top:392.6px" width="6" height="3"><path d="M0 0 H6 L3 3Z" fill="#f0f0f0"/></svg>
<div class="a" style="left:587px;top:406.5px;width:237px;height:1px;background:#3c3c3c;"></div>
<div class="a" style="left:587px;top:407.5px;width:237px;height:1px;background:#5e5e5e;"></div>
<div class="t" id="t47" style="left:592.8px;top:414.39px;font-size:11px;line-height:14px;color:#fff;transform:scaleX(0.8256);">ロック :</div>
<div class="t" id="t48" style="left:732.5999999999999px;top:414.39px;font-size:11px;line-height:14px;color:#fff;transform:scaleX(1.0179);">塗り :</div>
<div class="inp" style="left:765.5px;top:411.4px;width:36px;height:19px;background:#2e2e2e;"></div>
<div class="t" id="t49" style="left:768.9px;top:414.49px;font-size:11px;line-height:14px;color:#fff;transform:scaleX(1.0107);">100%</div>
<div class="btn" style="left:800.6px;top:411.4px;width:19px;height:19px;"></div>
<svg style="left:807.6px;top:420px" width="6" height="3"><path d="M0 0 H6 L3 3Z" fill="#f0f0f0"/></svg>
<div class="a" style="left:587px;top:433.5px;width:237px;height:1px;background:#3c3c3c;"></div>
<div class="a" style="left:587px;top:435.5px;width:223px;height:308px;background:#454545;"></div>
<div class="a" style="left:810px;top:435.5px;width:12.5px;height:308px;background:#404040;border-left:1px solid #383838;"></div>
<div class="a" style="left:587px;top:435.5px;width:223px;height:1.2px;background:#333;"></div>
<div class="a" style="left:587px;top:436.7px;width:29px;height:188.5px;background:#535353;"></div>
<div class="a" style="left:616px;top:436.7px;width:1px;height:188.5px;background:#3a3a3a;"></div>
<div class="a" style="left:617px;top:436.7px;width:193px;height:37.7px;background:#596679;"></div>
<div class="a" style="left:799px;top:436.7px;width:11px;height:36px;background:linear-gradient(#c6c6c6,#a2a4a8 45%,#7c8594);"></div>
<div class="t" id="t50" style="left:651.9px;top:449.59px;font-size:11px;line-height:14px;color:#fff;transform:scaleX(0.8690);">プロ生ちゃん のコピー</div>
<div class="t" id="t51" style="left:783.9px;top:446.85px;font-size:14px;line-height:17px;color:#e0e0e0;font-style:italic;font-family:'Liberation Serif',serif;transform:scaleX(1.1700);">fx</div>
<div class="a" style="left:617px;top:474.4px;width:193px;height:36.6px;background:#505050;"></div>
<div class="t" id="t52" style="left:652.6999999999999px;top:476.79px;font-size:11px;line-height:14px;color:#fff;transform:scaleX(1.0955);">効果</div>
<div class="t" id="t53" style="left:669.0px;top:495.19px;font-size:11px;line-height:14px;color:#fff;transform:scaleX(0.8242);">カラーオーバーレイ</div>
<div class="a" style="left:587px;top:511px;width:223px;height:1px;background:#383838;"></div>
<div class="a" style="left:617px;top:512px;width:193px;height:37.2px;background:#596679;"></div>
<div class="t" id="t54" style="left:652.6999999999999px;top:524.39px;font-size:11px;line-height:14px;color:#fff;transform:scaleX(0.9000);">レイヤー 1</div>
<div class="a" style="left:587px;top:549.2px;width:223px;height:1px;background:#383838;"></div>
<div class="a" style="left:617px;top:550.2px;width:193px;height:36.8px;background:#535353;"></div>
<div class="t" id="t55" style="left:651.9px;top:562.39px;font-size:11px;line-height:14px;color:#fff;transform:scaleX(0.8591);">プロ生ちゃん</div>
<div class="a" style="left:587px;top:587px;width:223px;height:1px;background:#383838;"></div>
<div class="a" style="left:617px;top:588px;width:193px;height:37.2px;background:#535353;"></div>
<div class="a" style="left:595.2px;top:600.6px;width:11.8px;height:11.4px;background:#5c5c5c;border:1px solid #3a3a3a;"></div>
<div class="t" id="t56" style="left:651.9px;top:600.19px;font-size:11px;line-height:14px;color:#fff;transform:scaleX(1.0773);">用紙</div>
<div class="a" style="left:587px;top:625.2px;width:223px;height:1px;background:#383838;"></div>
<div class="a" style="left:587px;top:743.4px;width:237px;height:1.4px;background:#383838;"></div>
<div class="a" style="left:587px;top:744.8px;width:237px;height:18.6px;background:#535353;border-top:1px solid #5e5e5e;"></div>
<div class="t" id="t57" style="left:654.0999999999999px;top:745.90px;font-size:13px;line-height:16px;color:#8c8c8c;font-style:italic;font-family:'Liberation Serif',serif;transform:scaleX(1.3222);">fx</div>
<svg style="left:0;top:0" width="829" height="768" viewBox="0 0 829 768"><rect x="560.6" y="94.4" width="4.4" height="3.4" fill="#4a4a4a" stroke="#dcdcdc" stroke-width="1"/><rect x="560.6" y="100" width="4.4" height="3.4" fill="#4a4a4a" stroke="#dcdcdc" stroke-width="1"/><rect x="560" y="105.2" width="5.6" height="4.8" fill="#bcbcbc"/><path d="M569.6 96 C574.8 96.4 575.2 104.4 568.8 107.8" fill="none" stroke="#dcdcdc" stroke-width="1.8"/><path d="M571.4 93 L567 96 L571.6 98.8Z" fill="#dcdcdc"/><path d="M563.4 132.6 L568 135 V140.6 L563.4 143.2 L558.8 140.6 V135Z" fill="#6a6a6a" stroke="#d0d0d0" stroke-width="1"/><path d="M558.8 135 L563.4 137.4 L568 135 M563.4 137.4 V143.2" fill="none" stroke="#d0d0d0" stroke-width="0.9"/><rect x="570" y="134" width="4" height="2.8" fill="#d4d4d4"/><rect x="570" y="139.4" width="4" height="2.8" fill="#d4d4d4"/><rect x="558.8" y="145" width="15.2" height="4" fill="#c4c4c4"/><path d="M569.6 146 H573.2 L571.4 148.4Z" fill="#222"/><rect x="602.9" y="117.7" width="16.6" height="16.6" fill="#8400ff" stroke="#d0d0d0" stroke-width="1"/><rect x="602" y="116.8" width="18.4" height="18.4" fill="none" stroke="#333" stroke-width="0.8"/><rect x="591.6" y="106" width="19" height="19" fill="#fff" stroke="#222" stroke-width="1.2"/><rect x="590.6" y="105" width="21" height="21" fill="none" stroke="#a0a0a0" stroke-width="0.9" rx="1"/><path d="M751.6 114.4 L756.4 119.2 V123.0 H746.8 V119.2Z" fill="#a4a4a4" stroke="#3c3c3c" stroke-width="0.9"/><path d="M751.6 138.8 L756.4 143.6 V147.4 H746.8 V143.6Z" fill="#a4a4a4" stroke="#3c3c3c" stroke-width="0.9"/><path d="M751.6 163.2 L756.4 168.0 V171.8 H746.8 V168.0Z" fill="#a4a4a4" stroke="#3c3c3c" stroke-width="0.9"/><defs><linearGradient id="ag" x1="0" y1="0" x2="0" y2="1"><stop offset="0" stop-color="#e4e4e4"/><stop offset="1" stop-color="#a8a8a8"/></linearGradient><linearGradient id="ah" x1="0" y1="0" x2="1" y2="0"><stop offset="0" stop-color="#3a3a3a"/><stop offset="1" stop-color="#d8d8d8"/></linearGradient><linearGradient id="av" x1="0" y1="0" x2="0" y2="1"><stop offset="0" stop-color="#5a5a5a"/><stop offset="1" stop-color="#dcdcdc"/></linearGradient></defs><path d="M661.4 261.5 L664.0 261.5" stroke="#d6d6d6" stroke-width="1.5"/><path d="M659.8 265.5 L661.6 267.3" stroke="#d6d6d6" stroke-width="1.5"/><path d="M655.8 267.1 L655.8 269.7" stroke="#d6d6d6" stroke-width="1.5"/><path d="M651.8 265.5 L650.0 267.3" stroke="#d6d6d6" stroke-width="1.5"/><path d="M650.2 261.5 L647.6 261.5" stroke="#d6d6d6" stroke-width="1.5"/><path d="M651.8 257.5 L650.0 255.7" stroke="#d6d6d6" stroke-width="1.5"/><path d="M655.8 255.9 L655.8 253.3" stroke="#d6d6d6" stroke-width="1.5"/><path d="M659.8 257.5 L661.6 255.7" stroke="#d6d6d6" stroke-width="1.5"/><circle cx="655.8" cy="261.5" r="3.9" fill="#6a6a6a" stroke="#d6d6d6" stroke-width="1.1"/><path d="M655.8 257.6 A3.9 3.9 0 0 0 655.8 265.4Z" fill="#d6d6d6"/><path d="M670.8 266.2 V259.6 L672.2 256.4 L673.4 259.6 L675 254.6 L676.6 259.4 L678.2 254.2 L679.8 259.2 L681.4 254.6 L683 259.4 L684.6 255.4 L686 259.6 L687.4 256.6 L688.8 259.8 V266.2Z" fill="url(#ag)"/><rect x="695.5" y="255.5" width="15" height="11.6" fill="#7c7c7c" stroke="#d6d6d6" stroke-width="1"/><path d="M695 259.2 H711 M695 263.2 H711 M700.4 255 V267.4 M705.8 255 V267.4" stroke="#bdbdbd" stroke-width="0.7"/><path d="M696 266.4 C703 266.4 703.4 256.2 710.4 256" fill="none" stroke="#f0f0f0" stroke-width="1.4"/><rect x="719.3" y="255.5" width="15.2" height="11.6" fill="#6e6e6e" stroke="#d6d6d6" stroke-width="1"/><path d="M719.6 266.8 L734.2 255.8 V266.8Z" fill="#c8c8c8"/><path d="M721.4 259.4 H726 M723.7 257.2 V261.6" stroke="#f0f0f0" stroke-width="1.2"/><path d="M728.4 263.8 H732.4" stroke="#444" stroke-width="1.2"/><path d="M742.2 254.4 H758 L750.1 268.8Z" fill="url(#av)" stroke="#cfcfcf" stroke-width="0.8"/><rect x="637.5" y="281.3" width="15.2" height="12.6" fill="#7a7a7a" stroke="#d6d6d6" stroke-width="1"/><rect x="638.0" y="281.8" width="3.6" height="5" fill="#c8c8c8"/><rect x="641.6" y="281.8" width="3.6" height="5" fill="#8a8a8a"/><rect x="645.2" y="281.8" width="3.6" height="5" fill="#d8d8d8"/><rect x="648.8" y="281.8" width="3.6" height="5" fill="#9a9a9a"/><rect x="638" y="287.2" width="14.2" height="6.2" fill="url(#av)"/><path d="M667.6 281.4 V284 M660.6 285.4 C664 283.4 671.2 283.4 674.6 285.4" fill="none" stroke="#d6d6d6" stroke-width="1.4"/><path d="M665.6 281 H669.6 L667.6 283.6Z" fill="#d6d6d6"/><path d="M662.4 285.6 L659.4 292 M662.4 285.6 L665.4 292 M672.8 285.6 L669.8 292 M672.8 285.6 L675.8 292" stroke="#d6d6d6" stroke-width="0.9"/><path d="M659 292 H665.8 A3.4 2.6 0 0 1 659 292Z M669.4 292 H676.2 A3.4 2.6 0 0 1 669.4 292Z" fill="#d6d6d6"/><rect x="684.5" y="281.3" width="14.8" height="12.6" fill="#4a4a4a" stroke="#d6d6d6" stroke-width="1"/><rect x="691.6" y="281.8" width="7.2" height="11.6" fill="url(#ag)"/><rect x="706.4" y="283" width="12.6" height="8.4" fill="#9c9c9c" stroke="#d6d6d6" stroke-width="0.9"/><rect x="708.4" y="281" width="4" height="2" fill="#d6d6d6"/><circle cx="712.6" cy="287" r="2.3" fill="#5a5a5a" stroke="#d6d6d6" stroke-width="0.8"/><circle cx="718.6" cy="290" r="4.4" fill="#8e8e8e" stroke="#d6d6d6" stroke-width="1.1"/><circle cx="738" cy="285.2" r="4.3" fill="#dcdcdc"/><circle cx="734.6" cy="290.4" r="4.3" fill="#bdbdbd"/><circle cx="741.6" cy="290.4" r="4.3" fill="#cdcdcd"/><path d="M738 288.4 L735.6 286.6 M738 288.4 L740.4 286.6 M738 288.4 V291.6" stroke="#444" stroke-width="1.4"/><rect x="754.5" y="281.3" width="14.8" height="12.6" fill="#bdbdbd" stroke="#d6d6d6" stroke-width="1"/><rect x="755.4" y="283.4" width="3.6" height="2.7" fill="#5a5a5a"/><rect x="760.0" y="283.4" width="3.6" height="2.7" fill="#7a7a7a"/><rect x="764.6" y="283.4" width="3.6" height="2.7" fill="#4a4a4a"/><rect x="755.4" y="287.0" width="3.6" height="2.7" fill="#8a8a8a"/><rect x="760.0" y="287.0" width="3.6" height="2.7" fill="#606060"/><rect x="764.6" y="287.0" width="3.6" height="2.7" fill="#707070"/><rect x="755.4" y="290.6" width="3.6" height="2.7" fill="#4e4e4e"/><rect x="760.0" y="290.6" width="3.6" height="2.7" fill="#6a6a6a"/><rect x="764.6" y="290.6" width="3.6" height="2.7" fill="#3e3e3e"/><rect x="649.1" y="308.3" width="15" height="12.4" fill="#5e5e5e" stroke="#d6d6d6" stroke-width="1"/><path d="M649.6 320.2 L663.6 308.8 V320.2Z" fill="#cfcfcf"/><ellipse cx="656.6" cy="314.5" rx="4.4" ry="3" transform="rotate(-38 656.6 314.5)" fill="#8a8a8a" stroke="#e0e0e0" stroke-width="0.6"/><rect x="672.5" y="308.3" width="15.2" height="12.4" fill="#9a9a9a" stroke="#d6d6d6" stroke-width="1"/><path d="M673 316.8 L683 308.8 H687.2 V310.8 L677 320.2 H673Z" fill="#5e5e5e"/><path d="M673 312.8 L678 308.8 H673Z" fill="#d8d8d8"/><path d="M687.2 315.8 L682 320.2 H687.2Z" fill="#d8d8d8"/><rect x="695.5" y="308.3" width="15" height="12.4" fill="#c4c4c4" stroke="#d6d6d6" stroke-width="1"/><path d="M696 317.40000000000003 L698.4 314.8 L700 316.2 L702.6 312.40000000000003 L704.4 313.8 L707 310.40000000000003 L708.6 311.8 L710 310.2 V314.2 L708.6 315.8 L707 314.6 L704.4 317.8 L702.6 316.6 L700 319.8 L698.4 318.40000000000003 L696 320.2Z" fill="#3c3c3c"/><rect x="719.3" y="308.3" width="15.2" height="12.4" fill="#8a8a8a" stroke="#d6d6d6" stroke-width="1"/><path d="M719.8 308.8 L726.9 314.5 L734 308.8Z M719.8 320.2 L726.9 314.5 L734 320.2Z" fill="#d0d0d0"/><path d="M719.8 308.8 L734 320.2 M734 308.8 L719.8 320.2" stroke="#e4e4e4" stroke-width="0.7"/><rect x="742.7" y="308.3" width="15" height="12.4" fill="url(#ah)" stroke="#cfcfcf" stroke-width="1"/><circle cx="601.8" cy="364.6" r="2.8" fill="none" stroke="#dcdcdc" stroke-width="1.3"/><path d="M599.8 366.8 L597.4 369.8" stroke="#dcdcdc" stroke-width="1.5"/><rect x="678.2" y="360.5" width="12.6" height="10.2" fill="#666" stroke="#cfcfcf" stroke-width="1"/><path d="M680 369 L683.4 365.4 L685.4 367.2 L687.4 365.8 L689.4 369Z" fill="#d4d4d4"/><circle cx="687.8" cy="363.4" r="1" fill="#d4d4d4"/><circle cx="707.1" cy="365.7" r="5.2" fill="#d0d0d0"/><path d="M703.4 369.4 A5.2 5.2 0 0 0 710.8 362Z" fill="#6a6a6a"/><path d="M725.8 360.8 H736.2 V364 H735.3 C735.1 362.4 734.6 362 733.4 362 H732.2 V368.6 C732.2 369.8 732.6 370 733.8 370.1 V370.8 H728.2 V370.1 C729.4 370 729.8 369.8 729.8 368.6 V362 H728.6 C727.4 362 726.9 362.4 726.7 364 H725.8Z" fill="#d4d4d4"/><rect x="750.2" y="361.6" width="8.8" height="8.4" fill="none" stroke="#d0d0d0" stroke-width="1.1"/><rect x="748.7" y="360.1" width="3" height="3" fill="#d8d8d8"/><rect x="748.7" y="368.5" width="3" height="3" fill="#d8d8d8"/><rect x="757.5" y="360.1" width="3" height="3" fill="#d8d8d8"/><rect x="757.5" y="368.5" width="3" height="3" fill="#d8d8d8"/><path d="M775.4 359.9 H780.6 L783.4 362.8 V371.8 H775.4Z" fill="#8a8a8a" stroke="#d0d0d0" stroke-width="1"/><path d="M780.4 360 V363 H783.3" fill="none" stroke="#d0d0d0" stroke-width="0.9"/><rect x="771.8" y="365.4" width="6.4" height="6.4" fill="#bdbdbd" stroke="#5a5a5a" stroke-width="0.6"/><rect x="633" y="415.8" width="11.4" height="11.4" fill="#b0b0b0"/><rect x="633.6" y="416.4" width="3.4" height="3.4" fill="#e0e0e0"/><rect x="637.0" y="416.4" width="3.4" height="3.4" fill="#8a8a8a"/><rect x="640.4" y="416.4" width="3.4" height="3.4" fill="#e0e0e0"/><rect x="633.6" y="419.8" width="3.4" height="3.4" fill="#8a8a8a"/><rect x="637.0" y="419.8" width="3.4" height="3.4" fill="#e0e0e0"/><rect x="640.4" y="419.8" width="3.4" height="3.4" fill="#8a8a8a"/><rect x="633.6" y="423.2" width="3.4" height="3.4" fill="#e0e0e0"/><rect x="637.0" y="423.2" width="3.4" height="3.4" fill="#8a8a8a"/><rect x="640.4" y="423.2" width="3.4" height="3.4" fill="#e0e0e0"/><path d="M667.6 413.8 L668.8 415 L661.6 423.2 L660.2 422Z" fill="#d8d8d8"/><path d="M659.8 422.6 L661.2 424 C660 426.6 656 427.6 653 426.2 C655.6 425.8 656.2 423.2 659.8 422.6Z" fill="#d8d8d8"/><path d="M681.5 414.2 L684.3 417.4 H682.3 V419.8 H684.7 V417.8 L687.9 420.6 L684.7 423.4 V421.4 H682.3 V423.8 H684.3 L681.5 427 L678.7 423.8 H680.7 V421.4 H678.3 V423.4 L675.1 420.6 L678.3 417.8 V419.8 H680.7 V417.4 H678.7Z" fill="#d8d8d8"/><rect x="698.6" y="419.6" width="9.6" height="7.2" rx="0.8" fill="#d4d4d4"/><path d="M700.8 420 V417.6 A2.6 2.8 0 0 1 706 417.6 V420" fill="none" stroke="#d4d4d4" stroke-width="1.6"/><rect x="702.8" y="421.8" width="1.3" height="2.8" fill="#555"/><path d="M800.8 456.8 L804.4 452.8 L808 456.8Z" fill="#3c3c3c"/><g transform="translate(595 450.2)"><path d="M0 4.4 C2.6 0.6 9.8 0.6 12.4 4.4 C9.8 8.4 2.6 8.4 0 4.4Z" fill="#cfcfcf" stroke="#9a9a9a" stroke-width="0.5"/><circle cx="6.2" cy="4.2" r="2.9" fill="#3a3a3a"/><circle cx="7" cy="3.2" r="1" fill="#f4f4f4"/></g><rect x="619.4" y="439.4" width="23.4" height="31.2" rx="1.6" fill="#fff" stroke="#111" stroke-width="1.1"/><rect x="623.75" y="440.00" width="3.75" height="3.75" fill="#cdcdcd"/><rect x="631.25" y="440.00" width="3.75" height="3.75" fill="#cdcdcd"/><rect x="638.75" y="440.00" width="3.75" height="3.75" fill="#cdcdcd"/><rect x="620.00" y="443.75" width="3.75" height="3.75" fill="#cdcdcd"/><rect x="627.50" y="443.75" width="3.75" height="3.75" fill="#cdcdcd"/><rect x="635.00" y="443.75" width="3.75" height="3.75" fill="#cdcdcd"/><rect x="623.75" y="447.50" width="3.75" height="3.75" fill="#cdcdcd"/><rect x="631.25" y="447.50" width="3.75" height="3.75" fill="#cdcdcd"/><rect x="638.75" y="447.50" width="3.75" height="3.75" fill="#cdcdcd"/><rect x="620.00" y="451.25" width="3.75" height="3.75" fill="#cdcdcd"/><rect x="627.50" y="451.25" width="3.75" height="3.75" fill="#cdcdcd"/><rect x="635.00" y="451.25" width="3.75" height="3.75" fill="#cdcdcd"/><rect x="623.75" y="455.00" width="3.75" height="3.75" fill="#cdcdcd"/><rect x="631.25" y="455.00" width="3.75" height="3.75" fill="#cdcdcd"/><rect x="638.75" y="455.00" width="3.75" height="3.75" fill="#cdcdcd"/><rect x="620.00" y="458.75" width="3.75" height="3.75" fill="#cdcdcd"/><rect x="627.50" y="458.75" width="3.75" height="3.75" fill="#cdcdcd"/><rect x="635.00" y="458.75" width="3.75" height="3.75" fill="#cdcdcd"/><rect x="623.75" y="462.50" width="3.75" height="3.75" fill="#cdcdcd"/><rect x="631.25" y="462.50" width="3.75" height="3.75" fill="#cdcdcd"/><rect x="638.75" y="462.50" width="3.75" height="3.75" fill="#cdcdcd"/><rect x="620.00" y="466.25" width="3.75" height="3.75" fill="#cdcdcd"/><rect x="627.50" y="466.25" width="3.75" height="3.75" fill="#cdcdcd"/><rect x="635.00" y="466.25" width="3.75" height="3.75" fill="#cdcdcd"/><path d="M625.2 448.6 C625 444.6 627.6 443.2 630.2 443.4 C633 443.4 635.4 445 635 449 C635.4 451 634.6 452.6 633.6 453 L626.4 453 C625.4 452 625 450.4 625.2 448.6Z" fill="#94724c"/><ellipse cx="630.2" cy="450" rx="2.6" ry="2.4" fill="#f0d8bc"/><path d="M627.8 452.6 H633.2 L634.4 457 L633.4 459.8 H627.6 L627 457Z" fill="#a9a27c"/><rect x="629.6" y="453" width="1.5" height="5.6" fill="#e8e4d0"/><path d="M627.8 459.4 H633.2 L633.8 461.8 H627.2Z" fill="#48602e"/><rect x="628.4" y="461.8" width="1.5" height="3" fill="#ecd8ba"/><rect x="631.2" y="461.8" width="1.5" height="3" fill="#ecd8ba"/><rect x="628.2" y="464.4" width="1.9" height="1.1" fill="#4a4238"/><rect x="631" y="464.4" width="1.9" height="1.1" fill="#4a4238"/><circle cx="632.6" cy="448.8" r="0.9" fill="#6a2a22"/><circle cx="628.6" cy="449" r="0.8" fill="#8a6a48"/><g transform="translate(635 478.4)"><path d="M0 4.4 C2.6 0.6 9.8 0.6 12.4 4.4 C9.8 8.4 2.6 8.4 0 4.4Z" fill="#cfcfcf" stroke="#9a9a9a" stroke-width="0.5"/><circle cx="6.2" cy="4.2" r="2.9" fill="#3a3a3a"/><circle cx="7" cy="3.2" r="1" fill="#f4f4f4"/></g><g transform="translate(651.2 496.8)"><path d="M0 4.4 C2.6 0.6 9.8 0.6 12.4 4.4 C9.8 8.4 2.6 8.4 0 4.4Z" fill="#cfcfcf" stroke="#9a9a9a" stroke-width="0.5"/><circle cx="6.2" cy="4.2" r="2.9" fill="#3a3a3a"/><circle cx="7" cy="3.2" r="1" fill="#f4f4f4"/></g><g transform="translate(595 526)"><path d="M0 4.4 C2.6 0.6 9.8 0.6 12.4 4.4 C9.8 8.4 2.6 8.4 0 4.4Z" fill="#cfcfcf" stroke="#9a9a9a" stroke-width="0.5"/><circle cx="6.2" cy="4.2" r="2.9" fill="#3a3a3a"/><circle cx="7" cy="3.2" r="1" fill="#f4f4f4"/></g><rect x="619.4" y="514.4" width="23.4" height="31.2" rx="1.6" fill="#fff" stroke="#111" stroke-width="1.1"/><g transform="translate(595 563.8)"><path d="M0 4.4 C2.6 0.6 9.8 0.6 12.4 4.4 C9.8 8.4 2.6 8.4 0 4.4Z" fill="#cfcfcf" stroke="#9a9a9a" stroke-width="0.5"/><circle cx="6.2" cy="4.2" r="2.9" fill="#3a3a3a"/><circle cx="7" cy="3.2" r="1" fill="#f4f4f4"/></g><rect x="619.4" y="552.8" width="23.4" height="31.2" rx="1.6" fill="#fff" stroke="#111" stroke-width="1.1"/><rect x="623.75" y="553.40" width="3.75" height="3.75" fill="#cdcdcd"/><rect x="631.25" y="553.40" width="3.75" height="3.75" fill="#cdcdcd"/><rect x="638.75" y="553.40" width="3.75" height="3.75" fill="#cdcdcd"/><rect x="620.00" y="557.15" width="3.75" height="3.75" fill="#cdcdcd"/><rect x="627.50" y="557.15" width="3.75" height="3.75" fill="#cdcdcd"/><rect x="635.00" y="557.15" width="3.75" height="3.75" fill="#cdcdcd"/><rect x="623.75" y="560.90" width="3.75" height="3.75" fill="#cdcdcd"/><rect x="631.25" y="560.90" width="3.75" height="3.75" fill="#cdcdcd"/><rect x="638.75" y="560.90" width="3.75" height="3.75" fill="#cdcdcd"/><rect x="620.00" y="564.65" width="3.75" height="3.75" fill="#cdcdcd"/><rect x="627.50" y="564.65" width="3.75" height="3.75" fill="#cdcdcd"/><rect x="635.00" y="564.65" width="3.75" height="3.75" fill="#cdcdcd"/><rect x="623.75" y="568.40" width="3.75" height="3.75" fill="#cdcdcd"/><rect x="631.25" y="568.40" width="3.75" height="3.75" fill="#cdcdcd"/><rect x="638.75" y="568.40" width="3.75" height="3.75" fill="#cdcdcd"/><rect x="620.00" y="572.15" width="3.75" height="3.75" fill="#cdcdcd"/><rect x="627.50" y="572.15" width="3.75" height="3.75" fill="#cdcdcd"/><rect x="635.00" y="572.15" width="3.75" height="3.75" fill="#cdcdcd"/><rect x="623.75" y="575.90" width="3.75" height="3.75" fill="#cdcdcd"/><rect x="631.25" y="575.90" width="3.75" height="3.75" fill="#cdcdcd"/><rect x="638.75" y="575.90" width="3.75" height="3.75" fill="#cdcdcd"/><rect x="620.00" y="579.65" width="3.75" height="3.75" fill="#cdcdcd"/><rect x="627.50" y="579.65" width="3.75" height="3.75" fill="#cdcdcd"/><rect x="635.00" y="579.65" width="3.75" height="3.75" fill="#cdcdcd"/><path d="M625.2 562.0 C625 558.0 627.6 556.6 630.2 556.8 C633 556.8 635.4 558.4 635 562.4 C635.4 564.4 634.6 566.0 633.6 566.4 L626.4 566.4 C625.4 565.4 625 563.8 625.2 562.0Z" fill="#94724c"/><ellipse cx="630.2" cy="563.4" rx="2.6" ry="2.4" fill="#f0d8bc"/><path d="M627.8 566.0 H633.2 L634.4 570.4 L633.4 573.1999999999999 H627.6 L627 570.4Z" fill="#a9a27c"/><rect x="629.6" y="566.4" width="1.5" height="5.6" fill="#e8e4d0"/><path d="M627.8 572.8 H633.2 L633.8 575.1999999999999 H627.2Z" fill="#48602e"/><rect x="628.4" y="575.1999999999999" width="1.5" height="3" fill="#ecd8ba"/><rect x="631.2" y="575.1999999999999" width="1.5" height="3" fill="#ecd8ba"/><rect x="628.2" y="577.8" width="1.9" height="1.1" fill="#4a4238"/><rect x="631" y="577.8" width="1.9" height="1.1" fill="#4a4238"/><circle cx="632.6" cy="562.1999999999999" r="0.9" fill="#6a2a22"/><circle cx="628.6" cy="562.4" r="0.8" fill="#8a6a48"/><rect x="619.4" y="591.0" width="23.4" height="31.2" rx="1.6" fill="#fff" stroke="#111" stroke-width="1.1"/><path d="M631.2 751.4 H629.4 A3 3 0 0 0 629.4 757.6 H631.2 M634.8 751.4 H636.6 A3 3 0 0 1 636.6 757.6 H634.8 M630 754.5 H636" fill="none" stroke="#d6d6d6" stroke-width="1.5"/><path d="M668.4 759.6 H670.6 L669.5 760.8Z" fill="#7a7a7a"/><rect x="680" y="750.2" width="12.6" height="9.4" fill="#8a8a8a"/><circle cx="686.3" cy="754.9" r="2.7" fill="#555"/><circle cx="711.8" cy="754.4" r="4.9" fill="#d6d6d6"/><path d="M708.3 757.9 A4.9 4.9 0 0 0 715.3 750.9Z" fill="#666"/><path d="M718.6 759.4 H721.6 L720.1 761Z" fill="#d6d6d6"/><path d="M731.8 750.4 H736.6 L737.8 752 H745 V759.6 H731.8Z" fill="#d6d6d6"/><path d="M759.4 750.4 H770 V759.8 H763 V754.2 H759.4Z" fill="#d6d6d6"/><path d="M759.6 755.6 H762 V758 Z" fill="#d6d6d6"/><path d="M785.4 752.4 H796 M788.6 752.2 V750.6 H792.8 V752.2" fill="none" stroke="#d6d6d6" stroke-width="1.2"/><path d="M786.2 753.8 H795.2 L794.4 760.4 H787Z" fill="#d6d6d6"/><path d="M788.8 755 V759.2 M790.7 755 V759.2 M792.6 755 V759.2" stroke="#555" stroke-width="0.8"/></svg>
</body>
</html>
